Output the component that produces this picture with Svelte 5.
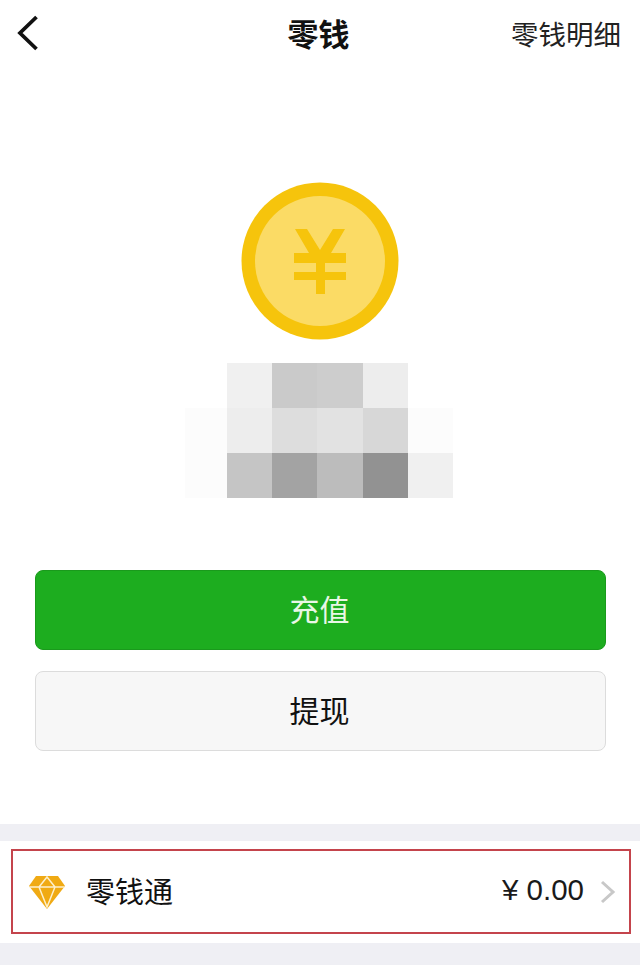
<script>
  const mosaic = [
    '#ffffff', '#f0f0f0', '#cacaca', '#cdcdcd', '#ededed', '#ffffff',
    '#fcfcfc', '#ededed', '#dddddd', '#e2e2e2', '#d7d7d7', '#fcfcfc',
    '#fcfcfc', '#c5c5c5', '#a3a3a3', '#bcbcbc', '#929292', '#f0f0f0'
  ];
</script>

<div class="page">
  <header class="nav">
    <svg class="back" width="24" height="36" viewBox="0 0 24 36">
      <path d="M20.5 2 L4 18 L20.5 34" fill="none" stroke="#111" stroke-width="3.8" />
    </svg>
    <h1>零钱</h1>
    <span class="detail">零钱明细</span>
  </header>

  <section class="hero">
    <svg class="coin" width="158" height="158" viewBox="0 0 158 158">
      <circle cx="79" cy="79" r="78.5" fill="#f6c40c" />
      <circle cx="79" cy="79" r="65" fill="#fbdb65" />
      <path d="M54 47 H66 L79 68 L92 47 H104 L90 71 H105 V81 H84 V90 H105 V98 H84 V112 H75 V98 H53 V90 H75 V81 H53 V71 H68 Z" fill="#f6c40c" />
    </svg>
    <div class="mosaic">
      {#each mosaic as c}
        <div style="background:{c}"></div>
      {/each}
    </div>
  </section>

  <div class="actions">
    <button class="green">充值</button>
    <button class="plain">提现</button>
  </div>

  <div class="band"></div>
  <div class="row-wrap">
    <div class="row">
      <svg class="gem" width="38" height="34" viewBox="0 0 38 34">
        <path d="M8 1 H30 L37 11 L19 34 L1 11 Z" fill="#f0aa14" />
        <path d="M1.5 12 H36.5 M11 12 L19 32 L27 12 M11 12 L19 2 L27 12" fill="none" stroke="#fdf0cc" stroke-width="1.5" />
      </svg>
      <span class="name">零钱通</span>
      <span class="amount">¥ 0.00</span>
      <svg class="chevron" width="16" height="24" viewBox="0 0 16 24">
        <path d="M2 2 L13 12 L2 22" fill="none" stroke="#c8c8c8" stroke-width="3" />
      </svg>
    </div>
  </div>
  <div class="band bottom"></div>
</div>

<style>
  :global(body) {
    margin: 0;
    background: #fff;
  }

  .page {
    width: 640px;
    height: 965px;
    overflow: hidden;
    display: flex;
    flex-direction: column;
    font-family: "Liberation Sans", "Noto Sans CJK SC", sans-serif;
    color: #111;
  }

  .nav {
    height: 70px;
    box-sizing: border-box;
    display: grid;
    grid-template-columns: 1fr auto 1fr;
    align-items: center;
    padding: 0 19px 5px 16px;
  }

  .back {
    justify-self: start;
  }

  h1 {
    margin: 0;
    font-size: 31px;
    font-weight: 700;
  }

  .detail {
    justify-self: end;
    font-size: 27.5px;
    color: #222;
  }

  .hero {
    display: flex;
    flex-direction: column;
    align-items: center;
    padding-top: 112px;
  }

  .coin {
    display: block;
  }

  .mosaic {
    display: grid;
    grid-template-columns: 42px repeat(5, 45.2px);
    grid-template-rows: repeat(3, 45px);
    margin-top: 23px;
    margin-right: 2px;
  }

  .actions {
    display: flex;
    flex-direction: column;
    gap: 21px;
    margin: 72px 34px 0 35px;
  }

  button {
    height: 80px;
    border-radius: 8px;
    font-family: inherit;
    font-size: 30px;
    padding: 0 2px 5px 0;
    box-sizing: border-box;
  }

  .green {
    background: #1dad1f;
    border: 1px solid #1a9a1c;
    color: #e9f7e6;
  }

  .plain {
    background: #f7f7f7;
    border: 1.5px solid #dcdcdc;
    color: #111;
  }

  .band {
    height: 17px;
    margin-top: 73px;
    background: #efeff4;
  }

  .band.bottom {
    flex: 1;
    margin-top: 0;
  }

  .row-wrap {
    height: 102px;
    box-sizing: border-box;
    padding: 8px 9px 9px 11px;
  }

  .row {
    height: 85px;
    box-sizing: border-box;
    border: 2px solid #c4444c;
    display: flex;
    align-items: center;
    padding: 0 13px 0 15px;
  }

  .name {
    margin-left: 20px;
    font-size: 29px;
    padding-bottom: 4px;
  }

  .amount {
    margin-left: auto;
    margin-right: 16px;
    font-size: 29.5px;
    color: #1a1a1a;
    padding-bottom: 4px;
  }
</style>
